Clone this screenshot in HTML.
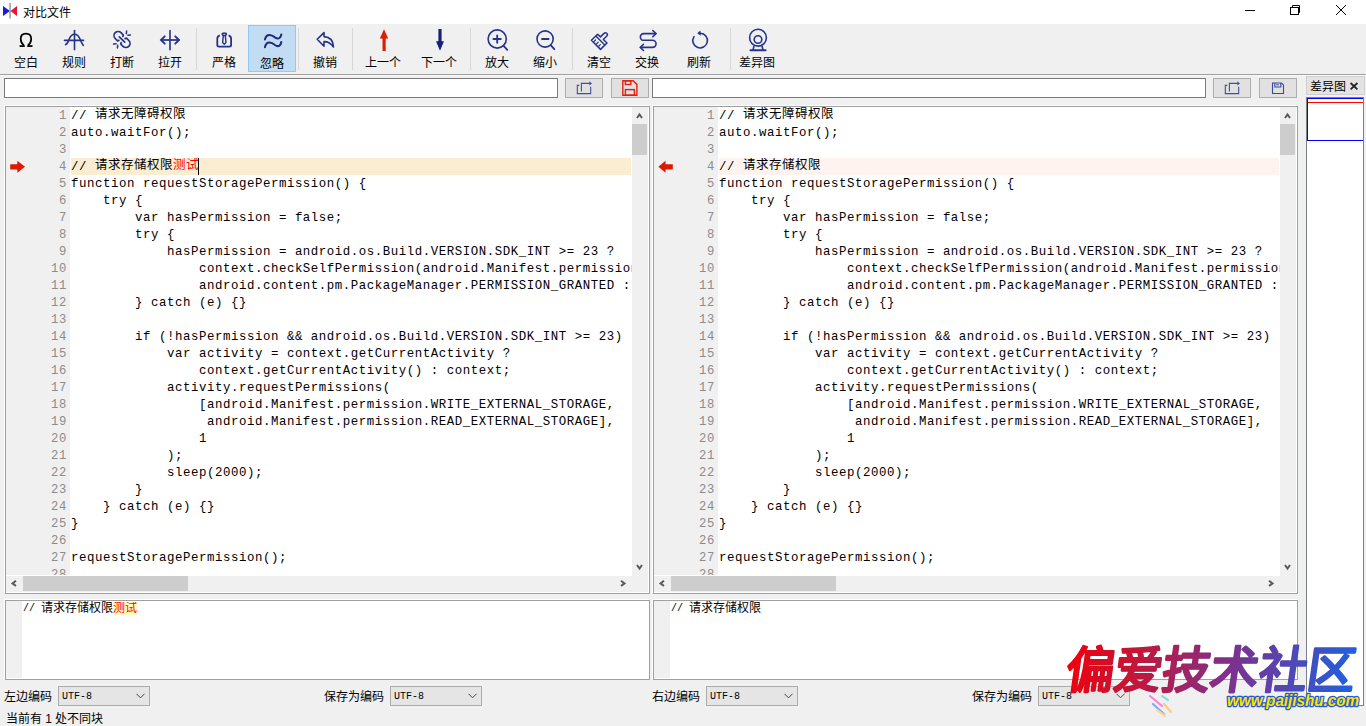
<!DOCTYPE html>
<html lang="zh-CN"><head><meta charset="utf-8"><style>
*{margin:0;padding:0;box-sizing:border-box}
html,body{width:1366px;height:726px;overflow:hidden;background:#f0f0f0;font-family:"Liberation Sans",sans-serif;font-size:12px;color:#000}
body{position:relative}
.a{position:absolute}
.tl{position:absolute;top:51px;width:60px;text-align:center;font-size:12px;line-height:16px;white-space:nowrap}
.sep{position:absolute;top:28px;width:1px;height:42px;background:#d7d7d7}
.edit{position:absolute;background:#fff;border:1px solid #7a7a7a}
.btn{position:absolute;background:#e1e1e1;border:1px solid #adadad}
.code{font-family:"Liberation Mono",monospace;font-size:13.33px;line-height:17px;white-space:pre}
.row{position:absolute;left:0;height:17px;white-space:pre;font-family:"Liberation Mono",monospace;font-size:12.4px;letter-spacing:0.56px;line-height:17px}
.ln{position:absolute;height:17px;text-align:right;color:#8c8c8c;font-family:"Liberation Mono",monospace;font-size:12.2px;letter-spacing:0.68px;line-height:17px}
.cj{display:inline-block;width:13px;font-family:"Liberation Sans",sans-serif;font-size:12.5px;line-height:17px;vertical-align:top;overflow:visible;position:relative;top:-2px;font-weight:300}
.sb{position:absolute;background:#f0f0f0}
.thumb{position:absolute;background:#cdcdcd}
.combo{position:absolute;background:#e5e5e5;border:1px solid #acacac;height:20px}
.combo span{position:absolute;left:3px;top:3px;font-family:"Liberation Mono",monospace;font-size:10px;line-height:14px}
.pa{font-family:"Liberation Mono",monospace;font-size:10px;display:inline-block;vertical-align:top;line-height:13px}
.pc{display:inline-block;width:12px;font-size:12px;line-height:13px;vertical-align:top;font-weight:300}
</style></head><body>
<div class="a" style="left:0;top:0;width:1366px;height:24px;background:#fff"></div>
<svg class="a" style="left:0;top:0" width="24" height="24"><polygon points="3,6 10,11 3,16" fill="#1a1ae6"/><polygon points="17,6 10.5,11 17,16" fill="#e6163a"/><rect x="9.3" y="3" width="1.6" height="15.5" fill="#a0a0a0"/></svg>
<div class="a" style="left:23px;top:4.5px;font-size:12px;line-height:17px">对比文件</div>
<svg class="a" style="left:1230px;top:0" width="136" height="24" fill="none" stroke="#000" stroke-width="1"><line x1="15" y1="10.5" x2="25" y2="10.5"/><rect x="60.5" y="7.5" width="8" height="7"/><polyline points="62.5,7.5 62.5,5.5 69.5,5.5 69.5,12.5 68.5,12.5"/><line x1="106" y1="5" x2="116" y2="15"/><line x1="116" y1="5" x2="106" y2="15"/></svg>
<div class="a" style="left:0;top:74px;width:1366px;height:1px;background:#a0a0a0"></div>
<div class="a" style="left:0;top:75px;width:1366px;height:1px;background:#f8f8f8"></div>
<div class="a" style="left:248px;top:25px;width:48px;height:47px;background:#c1dcf3;border:1px solid #90c8f6"></div>
<div class="tl" style="left:-4px;top:55px">空白</div>
<div class="tl" style="left:44px;top:55px">规则</div>
<div class="tl" style="left:92px;top:55px">打断</div>
<div class="tl" style="left:140px;top:55px">拉开</div>
<div class="tl" style="left:194px;top:55px">严格</div>
<div class="tl" style="left:242px;top:56px">忽略</div>
<div class="tl" style="left:295px;top:55px">撤销</div>
<div class="tl" style="left:353px;top:55px">上一个</div>
<div class="tl" style="left:409px;top:55px">下一个</div>
<div class="tl" style="left:467px;top:55px">放大</div>
<div class="tl" style="left:515px;top:55px">缩小</div>
<div class="tl" style="left:569px;top:55px">清空</div>
<div class="tl" style="left:617px;top:55px">交换</div>
<div class="tl" style="left:669px;top:55px">刷新</div>
<div class="tl" style="left:727px;top:55px">差异图</div>
<div class="sep" style="left:196px"></div>
<div class="sep" style="left:298px"></div>
<div class="sep" style="left:352px"></div>
<div class="sep" style="left:470px"></div>
<div class="sep" style="left:572px"></div>
<div class="sep" style="left:730px"></div>

<svg class="a" style="left:0;top:24px" width="800" height="50">
<path d="M23.9,21.4 C21.5,19.6 20.7,17 20.7,14.8 C20.7,11.6 22.9,9.65 25.95,9.65 C29,9.65 31.2,11.6 31.2,14.8 C31.2,17 30.4,19.6 28,21.4" fill="none" stroke="#000" stroke-width="1.75"/>
<rect x="19.6" y="21.2" width="5.2" height="1.75" fill="#000"/><rect x="27.2" y="21.2" width="5.3" height="1.75" fill="#000"/>
<g fill="none" stroke="#25338a" stroke-width="1.6" stroke-linecap="round">
 <line x1="74.5" y1="6.6" x2="74.5" y2="25.6"/>
 <path d="M65.6,20.6 Q67.6,19.8 69,15.5 Q71,10.2 74.5,10.2 Q78,10.2 80,15 Q81.5,19 83.3,21.4"/>
 <line x1="64.5" y1="16.4" x2="83.5" y2="16.4"/>
</g>
<g transform="translate(122,15.5) rotate(-45)" fill="none" stroke="#25338a" stroke-width="1.7" stroke-linecap="round" stroke-linejoin="round">
 <path d="M-2.8,-1.6 L-4.1,-2.2 L-4.1,-5.5 A4.1,4.1 0 0 1 4.1,-5.5 L4.1,-2.2 L2.8,-1.6"/>
 <path d="M-2.8,1.6 L-4.1,2.2 L-4.1,5.5 A4.1,4.1 0 0 0 4.1,5.5 L4.1,2.2 L2.8,1.6"/>
 <path d="M0,-3.8 L0,3.8"/>
 <path d="M7.2,-1.1 L9.2,-2.7 M7.2,1.1 L9.2,2.7 M-7.2,-1.1 L-9.2,-2.7 M-7.2,1.1 L-9.2,2.7" stroke-width="1.5"/>
</g>
<g fill="none" stroke="#25338a" stroke-width="1.6" stroke-linecap="round">
 <line x1="170" y1="6.8" x2="170" y2="25.5" stroke-width="1.9" stroke-opacity="0.85"/>
 <line x1="162" y1="16" x2="178.5" y2="16" stroke-width="1.9" stroke-opacity="0.85"/>
 <polyline points="164.7,12.3 161,16 164.7,19.7" stroke-width="1.9"/>
 <polyline points="175.3,12.3 179,16 175.3,19.7" stroke-width="1.9"/>
</g>
<g fill="none" stroke="#25338a" stroke-width="1.8" stroke-linejoin="round">
 <path d="M219.8,11.3 Q217.3,12.2 217.3,14.5 L217.3,21 Q217.3,22.6 219,22.6 L229.4,22.6 Q231.1,22.6 231.1,21 L231.1,14.5 Q231.1,12.2 228.6,11.3"/>
 <ellipse cx="224.3" cy="10.2" rx="2.1" ry="1.2" stroke-width="1.5"/>
 <path d="M223.3,11.6 L222.6,18.6 L224.3,20.2 L226,18.6 L225.3,11.6" stroke-width="1.4"/>
</g>
<g fill="none" stroke="#1f2a7a" stroke-width="2" stroke-linecap="round">
 <path d="M264.9,15.6 Q266,11 269.5,11 Q272,11 275,13.4 Q277.5,15.3 279.5,14 Q281,12.6 281.3,10.4"/>
 <path d="M264.9,23.2 Q266,18.6 269.5,18.6 Q272,18.6 275,21 Q277.5,22.9 279.5,21.6 Q281,20.2 281.3,18"/>
</g>
<g fill="none" stroke="#25338a" stroke-width="1.8" stroke-linejoin="round" stroke-linecap="round">
 <path d="M317.2,15.3 L324,8.6 L324,12.6 Q333.2,13.2 333.5,23 Q329.5,17.4 324,17.6 L324,22.2 Z" stroke-width="1.6"/>
</g>
<polygon points="384,5.3 388.2,14.5 385.7,14.5 385.7,27 382.5,27 382.5,14.5 379.8,14.5" fill="#dc1e05"/>
<polygon points="440,26.8 444,17.2 441.6,17.2 441.6,5 438.4,5 438.4,17.2 436,17.2" fill="#14207a"/>
<g fill="none" stroke="#25338a" stroke-width="1.8" stroke-linecap="round">
 <circle cx="497.2" cy="15" r="9.1" stroke-width="1.6"/><line x1="503.8" y1="22.2" x2="507.3" y2="25.8"/>
 <line x1="493.4" y1="15" x2="500.8" y2="15"/><line x1="497.2" y1="11.4" x2="497.2" y2="18.8"/>
 <circle cx="545.1" cy="15" r="8.1" stroke-width="1.6"/><line x1="550.9" y1="21.4" x2="554.3" y2="25.2"/>
 <line x1="542" y1="15" x2="548.6" y2="15"/>
</g>
<g fill="none" stroke="#25338a" stroke-width="1.6" stroke-linejoin="round" stroke-linecap="round">
 <path d="M591.4,16.3 L597.6,10.2 L600.5,12.9 L604,9.4 A1.9,1.9 0 0 1 606.8,12 L603.3,15.5 L607,19 L600.5,25.4 Z" stroke-width="1.5"/>
 <path d="M596.1,12.3 L604.3,20.6" stroke-width="1.4"/>
 <path d="M593.9,17.6 l1.6,-1.6 M596.5,19.9 l1.6,-1.6 M598.9,22 l1.4,-1.4" stroke-width="1.3"/>
</g>
<g fill="none" stroke="#25338a" stroke-width="1.8" stroke-linecap="round" stroke-linejoin="round">
 <path d="M655.8,9.6 L643.7,9.6 A3.35,3.35 0 0 0 643.7,16.3 L652.5,16.3 A3.55,3.55 0 0 1 652.5,23.4 L640.5,23.4" stroke-width="1.6"/>
 <polyline points="652.8,6.5 656,9.6 652.8,12.7" stroke-width="1.6"/>
 <polyline points="643.5,20.3 640.3,23.4 643.5,26.5" stroke-width="1.6"/>
</g>
<g fill="none" stroke="#25338a" stroke-width="1.8" stroke-linecap="round">
 <path d="M700.3,9.3 A7.3,7.3 0 1 1 694,12.6" stroke-width="1.6"/>
</g>
<polygon points="697.2,9.2 700.4,6.6 700.8,11.8" fill="#25338a"/>
<g fill="none" stroke="#25338a" stroke-width="1.6">
 <circle cx="758" cy="13.7" r="8.4"/>
 <circle cx="758" cy="15.5" r="3.8"/>
 <path d="M754,22 L753,26 M762,22 L763,26"/>
 <line x1="750.5" y1="26.3" x2="765.5" y2="26.3" stroke-width="2" stroke-linecap="round"/>
</g>
</svg>

<div class="edit" style="left:4px;top:78px;width:554px;height:20px"></div>
<div class="btn" style="left:565px;top:78px;width:38px;height:20px"></div>
<div class="btn" style="left:611px;top:78px;width:38px;height:20px"></div>
<div class="edit" style="left:652px;top:78px;width:554px;height:20px"></div>
<div class="btn" style="left:1213px;top:78px;width:38px;height:20px"></div>
<div class="btn" style="left:1259px;top:78px;width:38px;height:20px"></div>
<svg class="a" style="left:565px;top:78px" width="38" height="20" fill="none" stroke="#4050a0" stroke-width="1.1"><path d="M14.3,7.4 L12.3,7.4 L12.3,15.6 L25.7,15.6 L25.7,8.7"/><path d="M16.4,13.5 L16.4,5.4 L25,5.4"/><polygon points="24.3,3.3 27,5.4 24.3,7.5" fill="#4050a0" stroke="none"/></svg>
<svg class="a" style="left:1213px;top:78px" width="38" height="20" fill="none" stroke="#4050a0" stroke-width="1.1"><path d="M14.3,7.4 L12.3,7.4 L12.3,15.6 L25.7,15.6 L25.7,8.7"/><path d="M16.4,13.5 L16.4,5.4 L25,5.4"/><polygon points="24.3,3.3 27,5.4 24.3,7.5" fill="#4050a0" stroke="none"/></svg>
<svg class="a" style="left:611px;top:78px" width="38" height="20" fill="none" stroke="#e3200a" stroke-width="1.4"><path d="M11.8,2.8 L22.1,2.8 L25.9,6.4 L25.9,17.2 L11.8,17.2 Z"/><rect x="14.4" y="2.8" width="5.4" height="3.7"/><rect x="14.4" y="11.6" width="9" height="5.6"/></svg>
<svg class="a" style="left:1259px;top:78px" width="38" height="20" fill="none" stroke="#3a4a9a" stroke-width="1.1"><path d="M13.5,5 L22.5,5 L24.5,7 L24.5,15.5 L13.5,15.5 Z"/><path d="M15.8,5 L15.8,9 L21.8,9 L21.8,5"/><line x1="17" y1="6.8" x2="20" y2="6.8" stroke-width="0.9"/></svg>
<div class="a" style="left:1306px;top:76px;width:59px;height:19px;background:#e3e3e3;border:1px solid #d0d0d0"></div>
<div class="a" style="left:1310px;top:79px;font-size:12px;line-height:16px">差异图</div>
<svg class="a" style="left:1348px;top:81px" width="12" height="12" stroke="#222" stroke-width="1.8"><line x1="2.6" y1="2" x2="9.4" y2="8.4"/><line x1="9.4" y1="2" x2="2.6" y2="8.4"/></svg>
<div class="a" style="left:1306px;top:97px;width:58px;height:609px;background:#fff;border:1px solid #7a7f8a"></div>
<div class="a" style="left:1307px;top:98px;width:56px;height:43px;border:1px solid #0000ff;border-right:none"></div>
<div class="a" style="left:1308px;top:102px;width:55px;height:1px;background:#f00"></div>
<div class="a" style="left:4px;top:105px;width:645px;height:488px;border:1px solid #fff"></div>
<div class="a" style="left:5px;top:106px;width:645px;height:488px;background:#f0f0f0;border:1px solid #a0a0a0;overflow:hidden">
<div class="a" style="left:0;top:0;width:626px;height:469px;background:#fff"></div>
<div class="a" style="left:0;top:0;width:64px;height:468px;background:#f0f0f0"></div>
<div class="a" style="left:64px;top:0;width:562px;height:468px;overflow:hidden">
<div class="a" style="left:1px;top:51px;width:560px;height:17px;background:#fbedd1"></div>
<div class="row" style="left:1px;top:1px">// <span class="cj">请</span><span class="cj">求</span><span class="cj">无</span><span class="cj">障</span><span class="cj">碍</span><span class="cj">权</span><span class="cj">限</span></div>
<div class="row" style="left:1px;top:18px">auto.waitFor();</div>
<div class="row" style="left:1px;top:35px"></div>
<div class="row" style="left:1px;top:52px">// <span class="cj">请</span><span class="cj">求</span><span class="cj">存</span><span class="cj">储</span><span class="cj">权</span><span class="cj">限</span><span class="cj" style="color:#f00">测</span><span class="cj" style="color:#f00">试</span></div>
<div class="row" style="left:1px;top:69px">function requestStoragePermission() {</div>
<div class="row" style="left:1px;top:86px">    try {</div>
<div class="row" style="left:1px;top:103px">        var hasPermission = false;</div>
<div class="row" style="left:1px;top:120px">        try {</div>
<div class="row" style="left:1px;top:137px">            hasPermission = android.os.Build.VERSION.SDK_INT &gt;= 23 ?</div>
<div class="row" style="left:1px;top:154px">                context.checkSelfPermission(android.Manifest.permission.WRITE_EXTERNAL_STORAGE) ==</div>
<div class="row" style="left:1px;top:171px">                android.content.pm.PackageManager.PERMISSION_GRANTED : true;</div>
<div class="row" style="left:1px;top:188px">        } catch (e) {}</div>
<div class="row" style="left:1px;top:205px"></div>
<div class="row" style="left:1px;top:222px">        if (!hasPermission &amp;&amp; android.os.Build.VERSION.SDK_INT &gt;= 23)</div>
<div class="row" style="left:1px;top:239px">            var activity = context.getCurrentActivity ?</div>
<div class="row" style="left:1px;top:256px">                context.getCurrentActivity() : context;</div>
<div class="row" style="left:1px;top:273px">            activity.requestPermissions(</div>
<div class="row" style="left:1px;top:290px">                [android.Manifest.permission.WRITE_EXTERNAL_STORAGE,</div>
<div class="row" style="left:1px;top:307px">                 android.Manifest.permission.READ_EXTERNAL_STORAGE],</div>
<div class="row" style="left:1px;top:324px">                1</div>
<div class="row" style="left:1px;top:341px">            );</div>
<div class="row" style="left:1px;top:358px">            sleep(2000);</div>
<div class="row" style="left:1px;top:375px">        }</div>
<div class="row" style="left:1px;top:392px">    } catch (e) {}</div>
<div class="row" style="left:1px;top:409px">}</div>
<div class="row" style="left:1px;top:426px"></div>
<div class="row" style="left:1px;top:443px">requestStoragePermission();</div>
<div class="row" style="left:1px;top:460px"></div>
<div class="a" style="left:128px;top:51px;width:1px;height:17px;background:#000"></div>
</div>
<div class="a" style="left:0;top:0;width:64px;height:468px;overflow:hidden">
<div class="ln" style="left:0;width:61px;top:1px">1</div>
<div class="ln" style="left:0;width:61px;top:18px">2</div>
<div class="ln" style="left:0;width:61px;top:35px">3</div>
<div class="ln" style="left:0;width:61px;top:52px">4</div>
<div class="ln" style="left:0;width:61px;top:69px">5</div>
<div class="ln" style="left:0;width:61px;top:86px">6</div>
<div class="ln" style="left:0;width:61px;top:103px">7</div>
<div class="ln" style="left:0;width:61px;top:120px">8</div>
<div class="ln" style="left:0;width:61px;top:137px">9</div>
<div class="ln" style="left:0;width:61px;top:154px">10</div>
<div class="ln" style="left:0;width:61px;top:171px">11</div>
<div class="ln" style="left:0;width:61px;top:188px">12</div>
<div class="ln" style="left:0;width:61px;top:205px">13</div>
<div class="ln" style="left:0;width:61px;top:222px">14</div>
<div class="ln" style="left:0;width:61px;top:239px">15</div>
<div class="ln" style="left:0;width:61px;top:256px">16</div>
<div class="ln" style="left:0;width:61px;top:273px">17</div>
<div class="ln" style="left:0;width:61px;top:290px">18</div>
<div class="ln" style="left:0;width:61px;top:307px">19</div>
<div class="ln" style="left:0;width:61px;top:324px">20</div>
<div class="ln" style="left:0;width:61px;top:341px">21</div>
<div class="ln" style="left:0;width:61px;top:358px">22</div>
<div class="ln" style="left:0;width:61px;top:375px">23</div>
<div class="ln" style="left:0;width:61px;top:392px">24</div>
<div class="ln" style="left:0;width:61px;top:409px">25</div>
<div class="ln" style="left:0;width:61px;top:426px">26</div>
<div class="ln" style="left:0;width:61px;top:443px">27</div>
<div class="ln" style="left:0;width:61px;top:460px">28</div>
</div>
<svg class="a" style="left:4px;top:53px" width="20" height="14"><polygon points="0.2,4.3 7.3,4.3 7.3,0.8 15,6.8 7.3,12.8 7.3,9.6 0.2,9.6" fill="#dd1a00"/></svg>
<div class="thumb" style="left:626px;top:17px;width:15px;height:31px"></div>
<div class="thumb" style="left:17px;top:469px;width:165px;height:15px"></div>
<svg class="a" style="left:0;top:0" width="643" height="486" fill="none" stroke="#5a5a5a" stroke-width="2"><polyline points="631,11 633.5,7.5 636,11"/><polyline points="631,458 633.5,461.5 636,458"/><polyline points="10,473.8 6.5,476.4 10,479"/><polyline points="615,473.8 618.5,476.4 615,479"/></svg>
<div class="a" style="left:642px;top:0;width:1px;height:486px;background:#fff"></div>
<div class="a" style="left:0;top:485px;width:643px;height:1px;background:#fff"></div>
</div>
<div class="a" style="left:652px;top:105px;width:645px;height:488px;border:1px solid #fff"></div>
<div class="a" style="left:653px;top:106px;width:645px;height:488px;background:#f0f0f0;border:1px solid #a0a0a0;overflow:hidden">
<div class="a" style="left:0;top:0;width:626px;height:469px;background:#fff"></div>
<div class="a" style="left:0;top:0;width:64px;height:468px;background:#f0f0f0"></div>
<div class="a" style="left:64px;top:0;width:562px;height:468px;overflow:hidden">
<div class="a" style="left:1px;top:51px;width:560px;height:17px;background:#fef3ee"></div>
<div class="row" style="left:1px;top:1px">// <span class="cj">请</span><span class="cj">求</span><span class="cj">无</span><span class="cj">障</span><span class="cj">碍</span><span class="cj">权</span><span class="cj">限</span></div>
<div class="row" style="left:1px;top:18px">auto.waitFor();</div>
<div class="row" style="left:1px;top:35px"></div>
<div class="row" style="left:1px;top:52px">// <span class="cj">请</span><span class="cj">求</span><span class="cj">存</span><span class="cj">储</span><span class="cj">权</span><span class="cj">限</span></div>
<div class="row" style="left:1px;top:69px">function requestStoragePermission() {</div>
<div class="row" style="left:1px;top:86px">    try {</div>
<div class="row" style="left:1px;top:103px">        var hasPermission = false;</div>
<div class="row" style="left:1px;top:120px">        try {</div>
<div class="row" style="left:1px;top:137px">            hasPermission = android.os.Build.VERSION.SDK_INT &gt;= 23 ?</div>
<div class="row" style="left:1px;top:154px">                context.checkSelfPermission(android.Manifest.permission.WRITE_EXTERNAL_STORAGE) ==</div>
<div class="row" style="left:1px;top:171px">                android.content.pm.PackageManager.PERMISSION_GRANTED : true;</div>
<div class="row" style="left:1px;top:188px">        } catch (e) {}</div>
<div class="row" style="left:1px;top:205px"></div>
<div class="row" style="left:1px;top:222px">        if (!hasPermission &amp;&amp; android.os.Build.VERSION.SDK_INT &gt;= 23)</div>
<div class="row" style="left:1px;top:239px">            var activity = context.getCurrentActivity ?</div>
<div class="row" style="left:1px;top:256px">                context.getCurrentActivity() : context;</div>
<div class="row" style="left:1px;top:273px">            activity.requestPermissions(</div>
<div class="row" style="left:1px;top:290px">                [android.Manifest.permission.WRITE_EXTERNAL_STORAGE,</div>
<div class="row" style="left:1px;top:307px">                 android.Manifest.permission.READ_EXTERNAL_STORAGE],</div>
<div class="row" style="left:1px;top:324px">                1</div>
<div class="row" style="left:1px;top:341px">            );</div>
<div class="row" style="left:1px;top:358px">            sleep(2000);</div>
<div class="row" style="left:1px;top:375px">        }</div>
<div class="row" style="left:1px;top:392px">    } catch (e) {}</div>
<div class="row" style="left:1px;top:409px">}</div>
<div class="row" style="left:1px;top:426px"></div>
<div class="row" style="left:1px;top:443px">requestStoragePermission();</div>
<div class="row" style="left:1px;top:460px"></div>
</div>
<div class="a" style="left:0;top:0;width:64px;height:468px;overflow:hidden">
<div class="ln" style="left:0;width:61px;top:1px">1</div>
<div class="ln" style="left:0;width:61px;top:18px">2</div>
<div class="ln" style="left:0;width:61px;top:35px">3</div>
<div class="ln" style="left:0;width:61px;top:52px">4</div>
<div class="ln" style="left:0;width:61px;top:69px">5</div>
<div class="ln" style="left:0;width:61px;top:86px">6</div>
<div class="ln" style="left:0;width:61px;top:103px">7</div>
<div class="ln" style="left:0;width:61px;top:120px">8</div>
<div class="ln" style="left:0;width:61px;top:137px">9</div>
<div class="ln" style="left:0;width:61px;top:154px">10</div>
<div class="ln" style="left:0;width:61px;top:171px">11</div>
<div class="ln" style="left:0;width:61px;top:188px">12</div>
<div class="ln" style="left:0;width:61px;top:205px">13</div>
<div class="ln" style="left:0;width:61px;top:222px">14</div>
<div class="ln" style="left:0;width:61px;top:239px">15</div>
<div class="ln" style="left:0;width:61px;top:256px">16</div>
<div class="ln" style="left:0;width:61px;top:273px">17</div>
<div class="ln" style="left:0;width:61px;top:290px">18</div>
<div class="ln" style="left:0;width:61px;top:307px">19</div>
<div class="ln" style="left:0;width:61px;top:324px">20</div>
<div class="ln" style="left:0;width:61px;top:341px">21</div>
<div class="ln" style="left:0;width:61px;top:358px">22</div>
<div class="ln" style="left:0;width:61px;top:375px">23</div>
<div class="ln" style="left:0;width:61px;top:392px">24</div>
<div class="ln" style="left:0;width:61px;top:409px">25</div>
<div class="ln" style="left:0;width:61px;top:426px">26</div>
<div class="ln" style="left:0;width:61px;top:443px">27</div>
<div class="ln" style="left:0;width:61px;top:460px">28</div>
</div>
<svg class="a" style="left:4px;top:53px" width="20" height="14"><polygon points="14.8,4.3 7.5,4.3 7.5,0.8 0.4,6.8 7.5,12.8 7.5,9.6 14.8,9.6" fill="#dd1a00"/></svg>
<div class="thumb" style="left:626px;top:17px;width:15px;height:31px"></div>
<div class="thumb" style="left:17px;top:469px;width:165px;height:15px"></div>
<svg class="a" style="left:0;top:0" width="643" height="486" fill="none" stroke="#5a5a5a" stroke-width="2"><polyline points="631,11 633.5,7.5 636,11"/><polyline points="631,458 633.5,461.5 636,458"/><polyline points="10,473.8 6.5,476.4 10,479"/><polyline points="615,473.8 618.5,476.4 615,479"/></svg>
<div class="a" style="left:642px;top:0;width:1px;height:486px;background:#fff"></div>
<div class="a" style="left:0;top:485px;width:643px;height:1px;background:#fff"></div>
</div>
<div class="a" style="left:4px;top:599px;width:645px;height:80px;border:1px solid #fff"></div>
<div class="a" style="left:5px;top:600px;width:645px;height:80px;background:#fff;border:1px solid #a0a0a0;overflow:hidden">
<div class="a" style="left:0;top:0;width:16px;height:77px;background:#f0f0f0"></div>
<div class="a" style="left:17px;top:1px;height:14px;white-space:pre;line-height:13px"><span class="pa">// </span><span class="pc">请</span><span class="pc">求</span><span class="pc">存</span><span class="pc">储</span><span class="pc">权</span><span class="pc">限</span><span style="color:#f00;background:#ffffc0;display:inline-block;height:13px;overflow:hidden;vertical-align:top"><span class="pc">测</span><span class="pc">试</span></span></div>
<div class="a" style="left:642px;top:0;width:1px;height:78px;background:#fff"></div>
<div class="a" style="left:0;top:77px;width:643px;height:1px;background:#fff"></div>
</div>
<div class="a" style="left:652px;top:599px;width:645px;height:80px;border:1px solid #fff"></div>
<div class="a" style="left:653px;top:600px;width:645px;height:80px;background:#fff;border:1px solid #a0a0a0;overflow:hidden">
<div class="a" style="left:0;top:0;width:16px;height:77px;background:#f0f0f0"></div>
<div class="a" style="left:17px;top:1px;height:14px;white-space:pre;line-height:13px"><span class="pa">// </span><span class="pc">请</span><span class="pc">求</span><span class="pc">存</span><span class="pc">储</span><span class="pc">权</span><span class="pc">限</span></div>
<div class="a" style="left:642px;top:0;width:1px;height:78px;background:#fff"></div>
<div class="a" style="left:0;top:77px;width:643px;height:1px;background:#fff"></div>
</div>
<div class="a" style="left:4px;top:689px;font-size:12px;line-height:16px">左边编码</div>
<div class="combo" style="left:58px;top:686px;width:92px"><span>UTF-8</span><svg class="a" style="left:77px;top:6px" width="12" height="8" fill="none" stroke="#444" stroke-width="1"><polyline points="0.5,0.8 4.5,4.8 8.5,0.8"/></svg></div>
<div class="a" style="left:324px;top:689px;font-size:12px;line-height:16px">保存为编码</div>
<div class="combo" style="left:390px;top:686px;width:92px"><span>UTF-8</span><svg class="a" style="left:77px;top:6px" width="12" height="8" fill="none" stroke="#444" stroke-width="1"><polyline points="0.5,0.8 4.5,4.8 8.5,0.8"/></svg></div>
<div class="a" style="left:652px;top:689px;font-size:12px;line-height:16px">右边编码</div>
<div class="combo" style="left:706px;top:686px;width:92px"><span>UTF-8</span><svg class="a" style="left:77px;top:6px" width="12" height="8" fill="none" stroke="#444" stroke-width="1"><polyline points="0.5,0.8 4.5,4.8 8.5,0.8"/></svg></div>
<div class="a" style="left:972px;top:689px;font-size:12px;line-height:16px">保存为编码</div>
<div class="combo" style="left:1038px;top:686px;width:92px"><span>UTF-8</span><svg class="a" style="left:77px;top:6px" width="12" height="8" fill="none" stroke="#444" stroke-width="1"><polyline points="0.5,0.8 4.5,4.8 8.5,0.8"/></svg></div>
<div class="a" style="left:6px;top:711px;font-size:12px;line-height:16px">当前有 1 处不同块</div>
<svg class="a" style="left:1040px;top:630px" width="326" height="96">
<defs><linearGradient id="wg" x1="0" x2="1" y1="0" y2="0"><stop offset="0" stop-color="#f0000c"/><stop offset="0.25" stop-color="#c0183c"/><stop offset="0.55" stop-color="#80308a"/><stop offset="1" stop-color="#2060e0"/></linearGradient></defs>
<text x="24" y="58" font-size="50" font-weight="700" fill="url(#wg)" stroke="url(#wg)" stroke-width="1.2" stroke-linejoin="round" textLength="289" lengthAdjust="spacingAndGlyphs" transform="skewX(-8) translate(8,0)">偏爱技术社区</text>
<g stroke-width="2.2" stroke-linecap="round" opacity="0.75"><line x1="110" y1="66" x2="122" y2="76" stroke="#ff60d0"/><line x1="122" y1="66" x2="128" y2="70" stroke="#60e0e0"/><line x1="113" y1="74" x2="124" y2="84" stroke="#6090ff"/><line x1="124" y1="74" x2="131" y2="82" stroke="#ffc060"/><line x1="117" y1="80" x2="125" y2="86" stroke="#ffd080"/></g>
<text x="187" y="75.5" font-size="16.5" font-weight="bold" font-style="italic" fill="#ffe400" stroke="#1e5ad8" stroke-width="2.6" stroke-linejoin="round" paint-order="stroke" textLength="132" lengthAdjust="spacingAndGlyphs">www.paijishu.com</text>
</svg>
</body></html>
